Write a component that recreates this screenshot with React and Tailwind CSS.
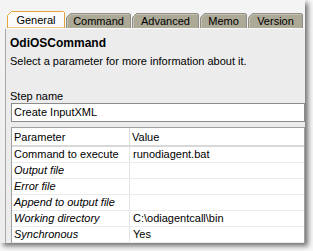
import React from "react";

function Tab({ label, w, selected }) {
  const h = selected ? 17 : 15;
  const d = `M0.5,${h} L0.5,4.5 L4.5,0.5 L${w - 1.5},0.5 L${w - 0.5},1.5 L${w - 0.5},${h}`;
  return (
    <div className="relative flex items-center justify-center" style={{ width: w, height: h }}>
      <svg className="absolute inset-0" width={w} height={h}>
        <path d={d + " Z"} fill={selected ? "#fbfbfb" : "#aca996"} stroke="none" />
        <path d={d} fill="none" stroke={selected ? "#e2a43e" : "#8e8e86"} strokeWidth="1" />
        {selected ? (
          <line x1="1" y1={h - 0.5} x2={w - 1} y2={h - 0.5} stroke="#f0c98a" strokeWidth="1" />
        ) : (
          <path d={`M1.5,${h} L1.5,5 L5,1.5 L${w - 2},1.5`} fill="none" stroke="#c4c2b2" strokeWidth="1" />
        )}
      </svg>
      <span className="relative leading-[13px] pt-[1px]">{label}</span>
    </div>
  );
}

const rows = [
  ["Command to execute", "runodiagent.bat", false],
  ["Output file", "", true],
  ["Error file", "", true],
  ["Append to output file", "", true],
  ["Working directory", "C:\\odiagentcall\\bin", true],
  ["Synchronous", "Yes", true],
];

export default function App() {
  return (
    <div className="w-[313px] h-[251px] bg-[#f7f7f7] overflow-hidden font-['Liberation_Sans',Arial,sans-serif] text-[11px] text-black">
      <div className="w-[305px] h-[243px] bg-gradient-to-b from-[#f4f4f4] to-[#ececec] shadow-[3px_3px_5px_rgba(0,0,0,0.55)] flex flex-col overflow-hidden">
        <div className="h-[28px] flex items-end pl-[7px] gap-[1px] shrink-0">
          <Tab label="General" w={58} selected />
          <Tab label="Command" w={65} />
          <Tab label="Advanced" w={67} />
          <Tab label="Memo" w={47} />
          <Tab label="Version" w={55} />
        </div>
        <div className="flex-1 ml-[5px] border-l border-[#a8a8a8] bg-[#ececec] flex flex-col pl-[4px] border-t border-t-[#fafafa]">
          <div className="pt-[7px] text-[12px] font-bold leading-[14px]">OdiOSCommand</div>
          <div className="mt-[5px] leading-[13px]">Select a parameter for more information about it.</div>
          <div className="mt-[22px] leading-[13px]">Step name</div>
          <div className="ml-[1px] h-[19px] bg-white border border-[#8c8c8c] flex items-center pl-[2px] leading-[13px]">
            Create InputXML
          </div>
          <div className="ml-[1px] mt-[5px] bg-white border border-[#a0a0a0] flex-1 flex flex-col">
            <div className="h-[19px] flex border-b-2 border-[#d8d8d8] shrink-0">
              <div className="w-[118px] border-r border-[#dcdcdc] pl-[2px] flex items-end pb-[1px] leading-[13px]">Parameter</div>
              <div className="flex-1 pl-[2px] flex items-end pb-[1px] leading-[13px]">Value</div>
            </div>
            {rows.map(([p, v, it]) => (
              <div key={p} className="h-[16px] flex border-b border-[#ececec] shrink-0">
                <div className={"w-[118px] border-r border-[#e4e4e4] pl-[2px] flex items-center leading-[13px] " + (it ? "italic" : "")}>{p}</div>
                <div className="flex-1 pl-[3px] flex items-center leading-[13px]">{v}</div>
              </div>
            ))}
          </div>
        </div>
      </div>
    </div>
  );
}
